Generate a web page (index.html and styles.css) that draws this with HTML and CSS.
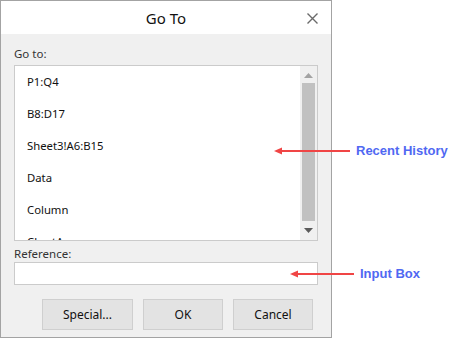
FILE: index.html
```html
<!DOCTYPE html>
<html lang="en">
<head>
    <meta charset="UTF-8">
    <title>Go To</title>
    <link rel="stylesheet" href="styles.css">
</head>
<body>
    <div class="page">
        <!-- dialog -->
        <div class="dialog">
            <div class="title-bar">
                <span class="title">Go To</span>
                <svg class="close" width="11" height="11" viewBox="0 0 11 11">
                    <path d="M0.5 0.5 L10.5 10.5 M10.5 0.5 L0.5 10.5" stroke="#6a6a6a" stroke-width="1.4" fill="none"/>
                </svg>
            </div>
            <div class="dialog-body">
                <div class="label">Go to:</div>
                <div class="listbox">
                    <ul class="items">
                        <li>P1:Q4</li>
                        <li>B8:D17</li>
                        <li>Sheet3!A6:B15</li>
                        <li>Data</li>
                        <li>Column</li>
                        <li>ChartA</li>
                    </ul>
                    <div class="scrollbar">
                        <svg class="arrow" width="9" height="5" viewBox="0 0 9 5"><path d="M0 5 L4.5 0 L9 5 Z" fill="#a3a3a3"/></svg>
                        <div class="thumb"></div>
                        <svg class="arrow" width="9" height="5" viewBox="0 0 9 5"><path d="M0 0 L9 0 L4.5 5 Z" fill="#5a5a5a"/></svg>
                    </div>
                </div>
                <div class="label ref-label">Reference:</div>
                <div class="input-box"></div>
                <div class="buttons">
                    <button class="btn btn-special">Special...</button>
                    <button class="btn">OK</button>
                    <button class="btn">Cancel</button>
                </div>
            </div>
        </div>

        <!-- callouts -->
        <div class="callout callout-history">
            <svg width="76" height="8" viewBox="0 0 76 8"><path d="M0 4 L8 0.5 L8 7.5 Z" fill="#f04545"/><path d="M6 4 H76" stroke="#f04545" stroke-width="2"/></svg>
            <span class="callout-text">Recent History</span>
        </div>
        <div class="callout callout-input">
            <svg width="64" height="8" viewBox="0 0 64 8"><path d="M0 4 L8 0.5 L8 7.5 Z" fill="#f04545"/><path d="M6 4 H64" stroke="#f04545" stroke-width="2"/></svg>
            <span class="callout-text">Input Box</span>
        </div>
    </div>
</body>
</html>
```

FILE: styles.css
```css
body {
    margin: 0;
    background: #fff;
    font-family: "Noto Sans", "Open Sans", sans-serif;
}

.page {
    position: relative;
    width: 454px;
    height: 339px;
}

.dialog {
    width: 330px;
    height: 336px;
    border: 1px solid #a3a3a3;
    background: #f0f0f0;
    display: flex;
    flex-direction: column;
}

.title-bar {
    height: 33px;
    background: #fff;
    position: relative;
    display: flex;
    align-items: center;
    justify-content: center;
}

.title {
    font-size: 15px;
    color: #111;
}

.close {
    position: absolute;
    right: 13px;
    top: 12px;
}

.dialog-body {
    padding: 0 13px;
}

.label {
    font-size: 11.5px;
    color: #333;
    height: 16px;
    line-height: 16px;
    margin-top: 12px;
    margin-bottom: 3px;
}

.listbox {
    height: 174px;
    border: 1px solid #cbcbcb;
    background: #fff;
    display: flex;
    overflow: hidden;
}

.items {
    flex: 1;
    list-style: none;
    margin: 0;
    padding: 0;
}

.items li {
    height: 32px;
    line-height: 32px;
    padding-left: 12px;
    font-size: 11.3px;
    color: #111;
}

.scrollbar {
    width: 17px;
    background: #f0f0f0;
    display: flex;
    flex-direction: column;
    align-items: center;
}

.scrollbar .arrow {
    margin: 7px 0;
}

.thumb {
    width: 13px;
    background: #c1c1c1;
    margin: -2px 0 0;
    flex: 1;
}

.ref-label {
    margin-top: 5px;
    margin-bottom: 0;
}

.input-box {
    height: 21px;
    border: 1px solid #cbcbcb;
    background: #fff;
}

.buttons {
    display: flex;
    justify-content: flex-end;
    gap: 10px;
    padding-right: 5px;
    margin-top: 14px;
}

.btn {
    width: 80px;
    height: 31px;
    background: #e3e3e3;
    border: 1px solid #cfcfcf;
    font-family: inherit;
    font-size: 12px;
    color: #111;
    padding: 0;
}

.btn-special {
    width: 91px;
}

.callout {
    position: absolute;
    display: flex;
    align-items: center;
    gap: 6px;
}

.callout-history {
    left: 274px;
    top: 143px;
}

.callout-input {
    left: 290px;
    top: 266px;
}

.callout-text {
    font-family: "Liberation Sans", Arial, sans-serif;
    font-weight: bold;
    font-size: 13px;
    color: #5068f2;
    line-height: 16px;
}
```
